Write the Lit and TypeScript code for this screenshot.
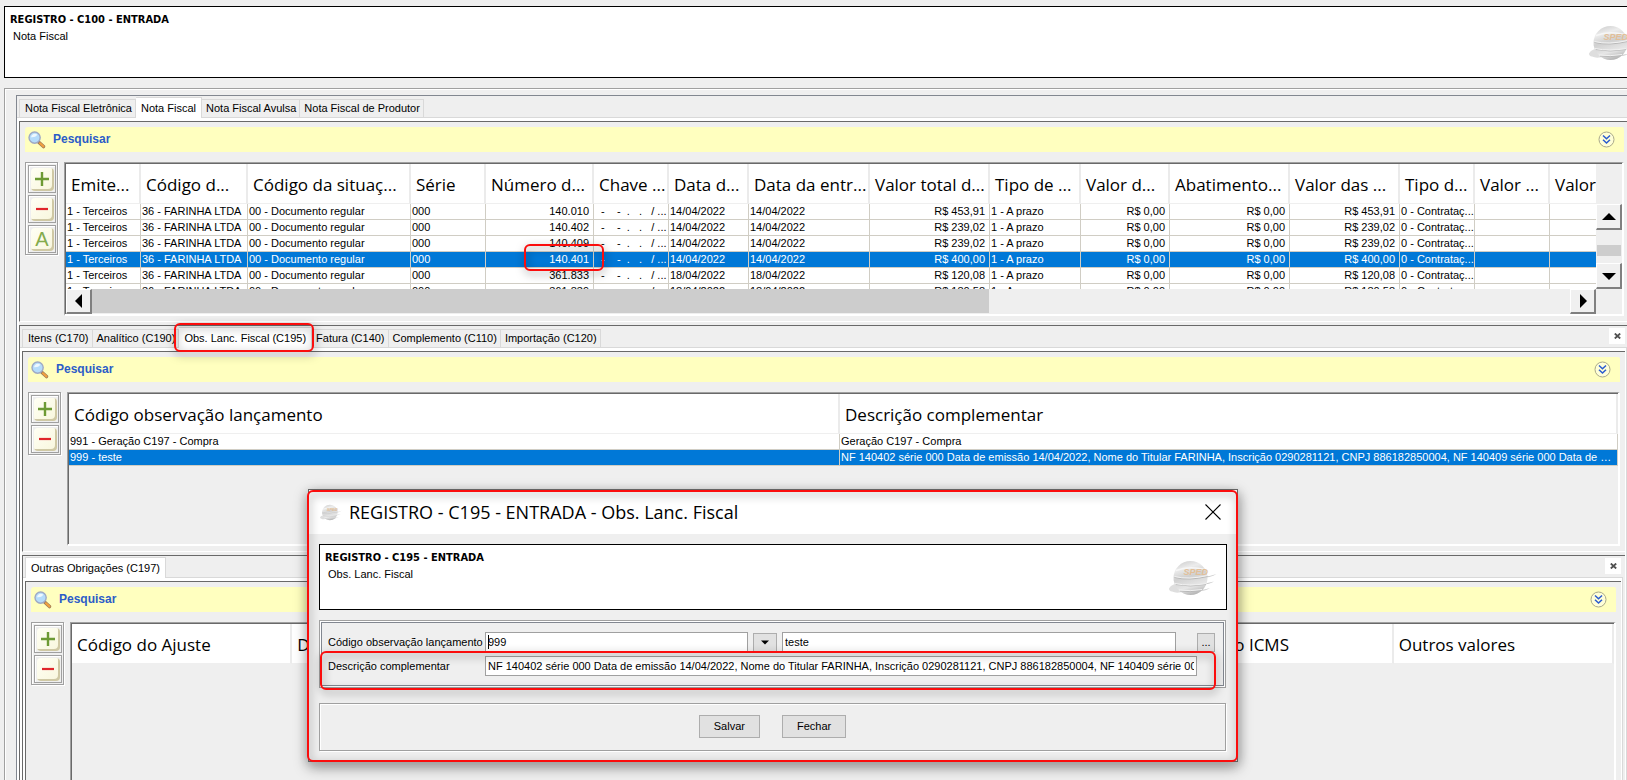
import { LitElement, html, css, nothing, TemplateResult } from "lit";
import { customElement, state } from "lit/decorators.js";
import { classMap } from "lit/directives/class-map.js";
import { styleMap } from "lit/directives/style-map.js";

interface Column {
  title: string;
  width?: number;
  right?: boolean;
}

const notaColumns: Column[] = [
  { title: "Emite...", width: 75 },
  { title: "Código d...", width: 107 },
  { title: "Código da situaç...", width: 163 },
  { title: "Série", width: 75 },
  { title: "Número d...", width: 108, right: true },
  { title: "Chave ...", width: 75 },
  { title: "Data d...", width: 80 },
  { title: "Data da entr...", width: 121 },
  { title: "Valor total d...", width: 120, right: true },
  { title: "Tipo de ...", width: 91 },
  { title: "Valor d...", width: 89, right: true },
  { title: "Abatimento...", width: 120, right: true },
  { title: "Valor das ...", width: 110, right: true },
  { title: "Tipo d...", width: 75 },
  { title: "Valor ...", width: 75 },
  { title: "Valor ...", width: 75 },
];

const nota = (numero: string, data: string, valor: string): string[] => [
  "1 - Terceiros",
  "36 - FARINHA LTDA",
  "00 - Documento regular",
  "000",
  numero,
  "  -    -  .   .   / ...",
  data,
  data,
  valor,
  "1 - A prazo",
  "R$ 0,00",
  "R$ 0,00",
  valor,
  "0 - Contrataç...",
  "",
  "",
];

const notas = [
  nota("140.010", "14/04/2022", "R$ 453,91"),
  nota("140.402", "14/04/2022", "R$ 239,02"),
  nota("140.409", "14/04/2022", "R$ 239,02"),
  nota("140.401", "14/04/2022", "R$ 400,00"),
  nota("361.833", "18/04/2022", "R$ 120,08"),
  nota("361.839", "18/04/2022", "R$ 180,58"),
];

const observacaoColumns: Column[] = [
  { title: "Código observação lançamento", width: 771 },
  { title: "Descrição complementar" },
];

const descricao =
  "NF 140402 série 000 Data de emissão 14/04/2022, Nome do Titular FARINHA, Inscrição 0290281121, CNPJ 886182850004, NF 140409 série 000 Data de emissão";

const observacoes = [
  ["991 - Geração C197 - Compra", "Geração C197 - Compra"],
  ["999 - teste", descricao],
];

const ajusteColumns: Column[] = [
  { title: "Código do Ajuste" },
  { title: "Descrição c..." },
  { title: "" },
  { title: "" },
  { title: "" },
  { title: "Valor do ICMS" },
  { title: "Outros valores" },
];

const magnifier = html`<svg width="18" height="18" viewBox="0 0 18 18" aria-hidden="true">
  <path d="M10.500 11l5 4.600" stroke="#9a7a5a" stroke-width="3.400" stroke-linecap="round" />
  <path d="M12 12.300l3.400 3.100" stroke="#f0a040" stroke-width="2.200" stroke-linecap="round" />
  <circle cx="6.600" cy="6.600" r="5.600" fill="#b5dcfb" stroke="#9fa9c4" stroke-width="1.400" />
  <path d="M3 6.200a3.800 3.800 0 0 1 6.400-2.400C8 5.800 5.400 6.600 3 6.200z" fill="#eef8ff" />
</svg>`;

const chevrons = html`<svg width="17" height="17" viewBox="0 0 17 17" fill="none" aria-hidden="true">
  <circle cx="8.500" cy="8.500" r="7.500" fill="#ffffd8" stroke="#a9a98a" />
  <path d="M5 4.500l3.500 3.300L12 4.500M5 8.700l3.500 3.300L12 8.700" stroke="#2a5bd0" stroke-width="1.500" />
</svg>`;

const logo = (width: number) => html`<svg width=${width} height=${Math.round(width * 0.75)} viewBox="0 0 48 36" aria-hidden="true">
  <defs>
    <linearGradient id="ball" x1="0.3" y1="0" x2="0.6" y2="1">
      <stop offset="0" stop-color="#d2d2d2" />
      <stop offset="0.2" stop-color="#ececec" />
      <stop offset="0.45" stop-color="#d0d0d0" />
      <stop offset="0.75" stop-color="#e6e6e6" />
      <stop offset="1" stop-color="#b2b2b2" />
    </linearGradient>
  </defs>
  <path d="M0 28.500q2-4 7-4.500-4-4-1-7 1-6 4-6l6 20q-8 3-13 .500-3-.500-3-3z" fill="#dedede" />
  <path d="M30 16.500q10 .500 17.500-2.500-6 4-17 4zM31 23.500q8 0 14-2-5 3.500-14 3zM29 30q7 0 12-2-5 3.500-12 3z" fill="#cccccc" />
  <circle cx="21.500" cy="18" r="17" fill="url(#ball)" />
  <path d="M5.500 17.500q14 3.500 33-1M7 24.500q14 3 30 0M11 31q10 1.500 21-.500" stroke="#b6b6b6" stroke-width="0.900" fill="none" />
  <path d="M5.500 16.500q14 3.500 33-1M6 23.500q14 3 31.500 0M10 30q11 1.500 23-.500" stroke="#f2f2f2" stroke-width="1" fill="none" />
  <path d="M7 10.500q13-5 29-1" stroke="#f6f6f6" stroke-width="1.500" fill="none" />
  <text x="14.500" y="15" font-size="9" font-style="italic" font-weight="bold" font-family="Liberation Sans, sans-serif" fill="#e2bf98">SPED</text>
</svg>`;

const plus = html`<svg class="glyph" width="14" height="14" viewBox="0 0 14 14" aria-hidden="true"><path d="M7 0v14M0 7h14" stroke="#6d9a34" stroke-width="2.400" /></svg>`;
const minus = html`<svg class="glyph" width="14" height="14" viewBox="0 0 14 14" aria-hidden="true"><path d="M1 7h12" stroke="#e0262b" stroke-width="2.200" /></svg>`;

const arrow = (direction: "up" | "down" | "left" | "right") => {
  const shapes = {
    up: "M7 3l7 7H0z",
    down: "M0 4h14l-7 7z",
    left: "M3 7l7-7v14z",
    right: "M11 7L4 0v14z",
  };
  return html`<svg width="14" height="14" viewBox="0 0 14 14" aria-hidden="true"><path d=${shapes[direction]} /></svg>`;
};

@customElement("app-root")
export class AppRoot extends LitElement {
  static styles = css`
    :host {
      display: block;
      height: 100vh;
      overflow: hidden;
      position: relative;
      background: #efefef;
      color: #000;
      font: 11px/14px "Liberation Sans", Arial, sans-serif;
    }
    * {
      box-sizing: border-box;
    }
    button,
    input {
      font: inherit;
      color: inherit;
      margin: 0;
      padding: 0;
    }
    button {
      display: flex;
      align-items: center;
      justify-content: center;
      background: none;
      border: 0;
      flex: none;
    }
    svg {
      display: block;
      flex: none;
    }
    .page {
      display: flex;
      flex-direction: column;
      height: 100%;
    }
    .banner {
      display: flex;
      justify-content: space-between;
      align-items: center;
      background: #fff;
      border: 1px solid #000;
      padding: 5px 9px 4px 5px;
      flex: none;
    }
    .banner-text {
      align-self: flex-start;
    }
    .page > .banner {
      height: 72px;
      margin: 6px -20px 0 4px;
    }
    .banner h1 {
      margin: 0;
      font: bold 11px/15px "DejaVu Sans Condensed", "DejaVu Sans", sans-serif;
    }
    .banner p {
      margin: 1px 0 0 3px;
      line-height: 16px;
    }
    .frame {
      flex: 1;
      min-height: 0;
      display: flex;
      margin: 10px -20px 0 4px;
      border: 1px solid #a0a0a0;
      border-bottom: 0;
      box-shadow: inset 1px 1px #fff;
      padding: 6px 13px 0 11px;
    }
    .level {
      flex: 1;
      min-width: 0;
      min-height: 0;
      display: flex;
      flex-direction: column;
      border: solid #696969;
      border-width: 1px 0 0 1px;
      padding-right: 2px;
    }
    .frame > .level {
      border-color: #828790;
    }
    .tabbar {
      display: flex;
      align-items: flex-end;
      height: 22px;
      padding-left: 2px;
      border-bottom: 1px solid #d9d9d9;
      flex: none;
    }
    .tab {
      height: 18px;
      padding: 0 3px 1px 4px;
      border: solid #d9d9d9;
      border-width: 1px 1px 0 0;
      white-space: nowrap;
    }
    .tab:first-child {
      border-left-width: 1px;
      padding-left: 5px;
    }
    .tab.selected {
      height: 21px;
      background: #fff;
      padding: 0 5px 1px;
      margin-bottom: -1px;
    }
    .close {
      width: 16px;
      height: 16px;
      margin: 0 2px 3px auto;
      background: #fff;
    }
    .stack {
      flex: 1;
      min-height: 0;
      display: flex;
      flex-direction: column;
      border: solid #fff;
      border-width: 3px 1px 0 2px;
      box-shadow: 1px 0 #d9d9d9;
      margin-right: 1px;
    }
    .panel {
      border: solid #696969;
      border-width: 1px 0 0 1px;
      border-bottom: 1px solid #fff;
      padding: 5px;
      margin-bottom: 3px;
      flex: none;
      display: flex;
      flex-direction: column;
      gap: 10px;
    }
    .panel.last {
      flex: 1;
      min-height: 0;
      margin: 0;
      padding-bottom: 0;
      border-bottom: 0;
    }
    .search {
      display: flex;
      align-items: center;
      height: 25px;
      padding: 0 9px 0 3px;
      background: #ffffbf;
      border-radius: 3px 2px 0 0;
      color: #2c5cc8;
      font-size: 12px;
      font-weight: bold;
    }
    .search span {
      margin: 0 auto 2px 7px;
    }
    .body {
      display: flex;
      gap: 6px;
      align-items: flex-start;
      height: 154px;
    }
    .last .body {
      flex: 1;
      min-height: 0;
    }
    .tools {
      display: flex;
      flex-direction: column;
      gap: 2px;
      padding: 2px 1px 1px 2px;
      border: 1px solid #a0a0a0;
      box-shadow: inset 1px 1px #fff, 1px 1px #fff;
      flex: none;
    }
    .tool {
      width: 28px;
      height: 28px;
      border: 1px solid #a0a0a0;
      box-shadow: inset 1px 1px #fff;
    }
    .tile {
      display: flex;
      align-items: center;
      justify-content: center;
      width: 23px;
      height: 23px;
      border-radius: 4px;
      background: linear-gradient(135deg, #fffff4, #f8f6dc);
      box-shadow: inset -2px -2px #cfc8a4;
      color: #84ab4c;
      font-size: 20px;
      line-height: 22px;
    }
    .glyph {
      margin: 0 1px 1px 0;
    }
    .grid {
      flex: 1;
      min-width: 0;
      align-self: stretch;
      display: flex;
      flex-direction: column;
      border: 1px solid #a0a0a0;
      border-right: 2px solid #fff;
      border-bottom: 2px solid #fff;
      box-shadow: inset 1px 1px #696969;
      padding: 1px 0 0 1px;
      overflow: hidden;
    }
    .last .grid {
      border-bottom: 0;
    }
    .upper {
      display: flex;
      flex: 1;
      min-height: 0;
    }
    .view {
      flex: 1;
      min-width: 0;
      overflow: hidden;
    }
    table {
      table-layout: fixed;
      border-collapse: separate;
      border-spacing: 0;
      width: 100%;
    }
    th {
      height: 40px;
      padding: 2px 0 0 5px;
      background: #fff;
      border-right: 2px solid #ebebeb;
      border-bottom: 1px solid #efefef;
      text-align: left;
      font: 17px/24px "Open Sans", "Noto Sans", sans-serif;
      white-space: nowrap;
      overflow: hidden;
    }
    td {
      height: 16px;
      padding: 0 0 0 1px;
      background: #fff;
      border-right: 1px solid #d0cdc4;
      border-bottom: 1px solid #d0cdc4;
      line-height: 15px;
      white-space: pre;
      overflow: hidden;
    }
    .fluid td {
      padding-right: 4px;
      text-overflow: ellipsis;
    }
    td.right {
      padding-right: 4px;
      text-align: right;
    }
    tr.selected td {
      background: #0078d7;
      color: #fff;
    }
    .bar-button {
      width: 26px;
      height: 25px;
      background: #f0f0f0;
      border: solid;
      border-width: 1px 2px 2px 1px;
      border-color: #fff #808080 #808080 #fff;
    }
    .vbar {
      width: 26px;
      height: 125px;
      padding-top: 40px;
      display: flex;
      flex-direction: column;
      flex: none;
    }
    .vbar .bar-button {
      height: 26px;
    }
    .vtrack {
      flex: 1;
      padding: 15px 1px 0;
    }
    .vthumb {
      height: 11px;
      background: #cdcdcd;
    }
    .hbar {
      display: flex;
      height: 25px;
      padding-right: 26px;
      flex: none;
    }
    .htrack {
      flex: 1;
    }
    .hthumb {
      height: 24px;
      background: #cdcdcd;
    }
    .mark {
      position: absolute;
      border: 2px solid #fb0d0d;
      border-radius: 6px;
      filter: drop-shadow(1px 3px 4px rgba(0, 0, 0, 0.5));
      pointer-events: none;
    }
    .mark-number {
      left: 524px;
      top: 244px;
      width: 80px;
      height: 27px;
    }
    .mark-tab {
      left: 174px;
      top: 323px;
      width: 140px;
      height: 29px;
    }
    .dialog {
      position: absolute;
      left: 308px;
      top: 489px;
      width: 930px;
      background: #efefef;
      border: 1px solid #696969;
      box-shadow: 0 5px 14px rgba(0, 0, 0, 0.32);
      padding-bottom: 10px;
    }
    .titlebar {
      display: flex;
      align-items: center;
      gap: 7px;
      height: 44px;
      padding: 0 16px 0 11px;
      background: #fff;
    }
    .titlebar h2 {
      margin: 0;
      flex: 1;
      font: 18px/24px "Open Sans", "Noto Sans", sans-serif;
    }
    .dialog .banner {
      height: 66px;
      margin: 10px 10px 0;
    }
    .form {
      margin: 10px 11px 0 10px;
      padding: 2px;
      border: 1px solid #a0a0a0;
      background: #fff;
    }
    .form-inner {
      display: flex;
      flex-direction: column;
      gap: 4px;
      margin: -1px;
      padding: 9px 8px 9px 6px;
      border: 1px solid #828790;
      background: #efefef;
    }
    .field {
      display: flex;
      align-items: center;
    }
    .field label {
      width: 157px;
      flex: none;
      white-space: nowrap;
    }
    .field input {
      height: 20px;
      min-width: 0;
      padding: 0 2px;
      border: 1px solid #a0a0a0;
      border-radius: 0;
      background: #fff;
      outline: 0;
    }
    .code {
      position: relative;
      display: flex;
      width: 263px;
    }
    .code input {
      width: 100%;
    }
    .caret {
      position: absolute;
      left: 3px;
      top: 3px;
      width: 1px;
      height: 14px;
      background: #000;
    }
    .gray {
      border: 1px solid #adadad;
      background: #e1e1e1;
    }
    .drop {
      width: 24px;
      height: 19px;
      margin: 0 5px;
    }
    .name {
      flex: 1;
      margin-right: 21px;
    }
    .more {
      width: 18px;
      height: 19px;
    }
    .description {
      flex: 1;
      margin-right: 18px;
    }
    .actions {
      display: flex;
      justify-content: center;
      gap: 22px;
      margin: 15px 11px 0 10px;
      height: 48px;
      padding-top: 11px;
      border: 1px solid #a0a0a0;
      box-shadow: inset 1px 1px #fff, 1px 1px #fff;
    }
    .actions .gray {
      height: 23px;
      padding: 0 14px 1px;
    }
    .mark-description {
      left: 11px;
      top: 161px;
      width: 896px;
      height: 39px;
    }
    .mark-dialog {
      inset: 0 -1px -1px -2px;
    }
  `;

  @state() private notaTab = 1;
  @state() private detailTab = 2;
  @state() private selectedNota = 3;
  @state() private selectedObs = 1;
  @state() private scrollShare = 60.7;

  private tabs(labels: string[], selected: number, select: (i: number) => void, closable = true) {
    return html`<div class="tabbar" role="tablist">
      ${labels.map(
        (label, i) => html`<button
          class=${classMap({ tab: true, selected: i === selected })}
          role="tab"
          aria-selected=${i === selected ? "true" : "false"}
          @click=${() => select(i)}
        >${label}</button>`
      )}
      ${closable
        ? html`<button class="close" aria-label="Fechar aba">
            <svg width="7" height="6" viewBox="0 0 7 6" aria-hidden="true">
              <path d="M.8.500l5.400 5M6.200.500l-5.400 5" stroke="#505050" stroke-width="1.800" />
            </svg>
          </button>`
        : nothing}
    </div>`;
  }

  private search() {
    return html`<div class="search">
      ${magnifier}<span>Pesquisar</span><button aria-label="Expandir pesquisa">${chevrons}</button>
    </div>`;
  }

  private tools(duplicate = false) {
    return html`<div class="tools">
      <button class="tool" aria-label="Incluir"><span class="tile">${plus}</span></button>
      <button class="tool" aria-label="Excluir"><span class="tile">${minus}</span></button>
      ${duplicate ? html`<button class="tool"><span class="tile">A</span></button>` : nothing}
    </div>`;
  }

  private table(columns: Column[], rows: string[][], selected = -1, select?: (i: number) => void) {
    const fixed = columns.every((c) => c.width);
    const total = columns.reduce((sum, c) => sum + (c.width ?? 0), 0);
    return html`<table class=${classMap({ fluid: !fixed })} style=${styleMap(fixed ? { width: `${total}px` } : {})}>
      <colgroup>
        ${columns.map((c) => (c.width ? html`<col width=${c.width} />` : html`<col />`))}
      </colgroup>
      <thead>
        <tr>${columns.map((c) => html`<th scope="col">${c.title}</th>`)}</tr>
      </thead>
      <tbody>
        ${rows.map(
          (row, i) => html`<tr class=${classMap({ selected: i === selected })} @click=${() => select?.(i)}>
            ${row.map((cell, j) => html`<td class=${classMap({ right: !!columns[j].right })}>${cell}</td>`)}
          </tr>`
        )}
      </tbody>
    </table>`;
  }

  private banner(title: string, subtitle: string) {
    return html`<header class="banner">
      <div class="banner-text"><h1>${title}</h1><p>${subtitle}</p></div>
      ${logo(48)}
    </header>`;
  }

  private ajustes() {
    return html`<section class="level">
      ${this.tabs(["Outras Obrigações (C197)"], 0, () => {})}
      <div class="stack">
        <div class="panel last">
          ${this.search()}
          <div class="body">
            ${this.tools()}
            <div class="grid"><div class="view">${this.table(ajusteColumns, [])}</div></div>
          </div>
        </div>
      </div>
    </section>`;
  }

  private observacoes() {
    return html`<section class="level">
      ${this.tabs(
        [
          "Itens (C170)",
          "Analítico (C190)",
          "Obs. Lanc. Fiscal (C195)",
          "Fatura (C140)",
          "Complemento (C110)",
          "Importação (C120)",
        ],
        this.detailTab,
        (i) => (this.detailTab = i)
      )}
      <div class="stack">
        <div class="panel">
          ${this.search()}
          <div class="body">
            ${this.tools()}
            <div class="grid">
              <div class="view">
                ${this.table(observacaoColumns, observacoes, this.selectedObs, (i) => (this.selectedObs = i))}
              </div>
            </div>
          </div>
        </div>
        ${this.ajustes()}
      </div>
    </section>`;
  }

  private dialog(): TemplateResult {
    return html`<div class="dialog" role="dialog" aria-labelledby="dialog-title">
      <div class="titlebar">
        ${logo(22)}
        <h2 id="dialog-title">REGISTRO - C195 - ENTRADA - Obs. Lanc. Fiscal</h2>
        <button aria-label="Fechar janela">
          <svg width="16" height="16" viewBox="0 0 16 16" aria-hidden="true">
            <path d="M.500.500l15 15M15.500.500l-15 15" stroke="#000" stroke-width="1.100" />
          </svg>
        </button>
      </div>
      ${this.banner("REGISTRO - C195 - ENTRADA", "Obs. Lanc. Fiscal")}
      <div class="form">
        <div class="form-inner">
          <div class="field">
            <label for="codigo">Código observação lançamento</label>
            <div class="code"><input id="codigo" value="999" /><span class="caret"></span></div>
            <button class="gray drop" aria-label="Abrir lista">
              <svg width="8" height="5" viewBox="0 0 8 5" aria-hidden="true"><path d="M0 .500h8L4 4.500z" /></svg>
            </button>
            <input class="name" aria-label="Nome da observação" value="teste" />
            <button class="gray more">...</button>
          </div>
          <div class="field">
            <label for="descricao">Descrição complementar</label>
            <input id="descricao" class="description" value=${descricao} />
          </div>
        </div>
      </div>
      <div class="actions">
        <button class="gray">Salvar</button>
        <button class="gray">Fechar</button>
      </div>
      <div class="mark mark-description"></div>
      <div class="mark mark-dialog"></div>
    </div>`;
  }

  render() {
    return html`<div class="page">
        ${this.banner("REGISTRO - C100 - ENTRADA", "Nota Fiscal")}
        <main class="frame">
          <section class="level">
            ${this.tabs(
              ["Nota Fiscal Eletrônica", "Nota Fiscal", "Nota Fiscal Avulsa", "Nota Fiscal de Produtor"],
              this.notaTab,
              (i) => (this.notaTab = i),
              false
            )}
            <div class="stack">
              <div class="panel">
                ${this.search()}
                <div class="body">
                  ${this.tools(true)}
                  <div class="grid">
                    <div class="upper">
                      <div class="view">
                        ${this.table(notaColumns, notas, this.selectedNota, (i) => (this.selectedNota = i))}
                      </div>
                      <div class="vbar">
                        <button class="bar-button" aria-label="Rolar para cima">${arrow("up")}</button>
                        <div class="vtrack"><div class="vthumb"></div></div>
                        <button class="bar-button" aria-label="Rolar para baixo">${arrow("down")}</button>
                      </div>
                    </div>
                    <div class="hbar">
                      <button class="bar-button" aria-label="Rolar para a esquerda">${arrow("left")}</button>
                      <div class="htrack">
                        <div class="hthumb" style=${styleMap({ width: `${this.scrollShare}%` })}></div>
                      </div>
                      <button class="bar-button" aria-label="Rolar para a direita">${arrow("right")}</button>
                    </div>
                  </div>
                </div>
              </div>
              ${this.observacoes()}
            </div>
          </section>
        </main>
      </div>
      <div class="mark mark-number"></div>
      <div class="mark mark-tab"></div>
      ${this.dialog()}`;
  }
}
